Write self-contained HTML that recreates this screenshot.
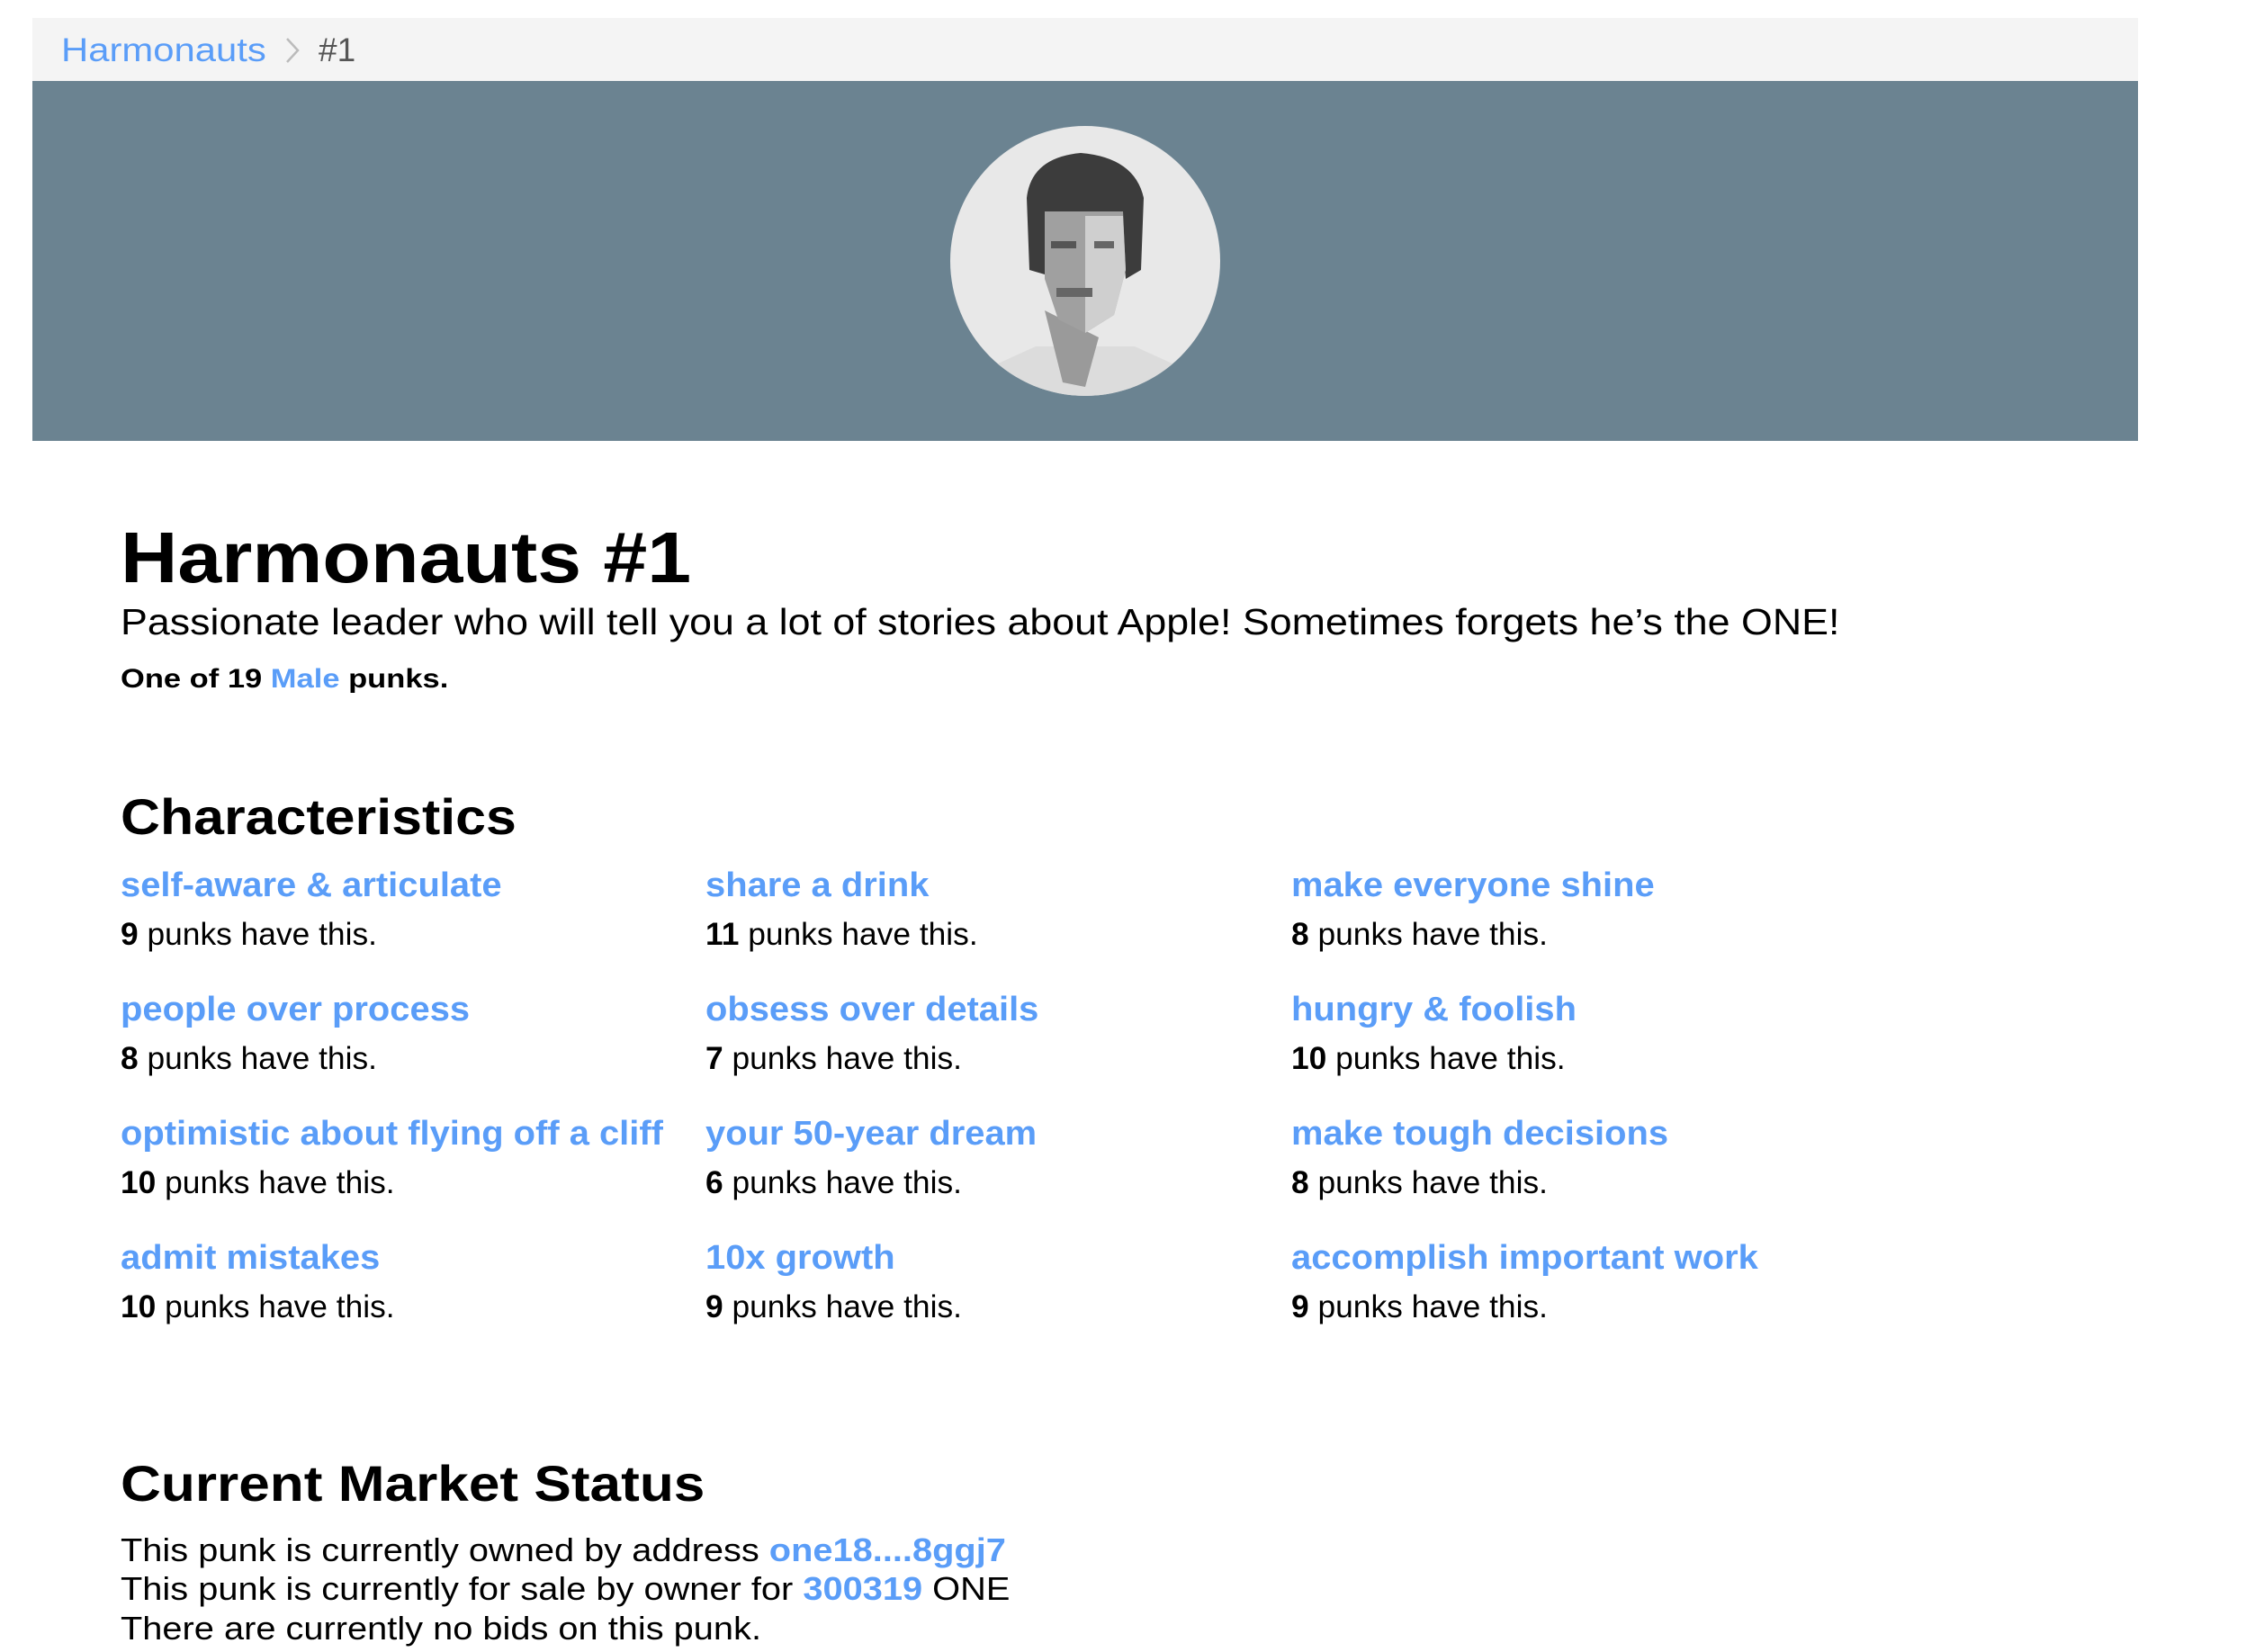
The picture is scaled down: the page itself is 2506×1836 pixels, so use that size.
<!DOCTYPE html>
<html><head><meta charset="utf-8"><style>
html,body{margin:0;padding:0;background:#fff;width:2506px;height:1836px;overflow:hidden;position:relative;font-family:"Liberation Sans",sans-serif;color:#000}
.a{position:absolute;white-space:nowrap;line-height:1;transform-origin:0 0}
.b{color:#5a9df8}
.bold{font-weight:bold}
.l{transform:scaleX(1.05)}
.c{transform:scaleX(1.01)}
.m{transform:scaleX(1.105)}
</style></head><body>
<div class="a" style="left:36px;top:20px;width:2340px;height:70px;background:#f4f4f4"></div>
<div class="a b" style="left:68px;top:37px;font-size:37px;transform:scaleX(1.13)">Harmonauts</div>
<svg class="a" style="left:314px;top:40px" width="24" height="32" viewBox="0 0 24 32"><path d="M5 3 L17 16 L5 29" fill="none" stroke="#bbb" stroke-width="2.5"/></svg>
<div class="a" style="left:354px;top:37px;font-size:37px;color:#555">#1</div>
<div class="a" style="left:36px;top:90px;width:2340px;height:400px;background:#6b8391"></div>
<svg class="a" style="left:1056px;top:140px" width="300" height="300" viewBox="0 0 300 300">
<defs><clipPath id="c"><circle cx="150" cy="150" r="150"/></clipPath></defs>
<circle cx="150" cy="150" r="150" fill="#e8e8e8"/>
<g clip-path="url(#c)">
<path d="M40 270 L95 245 L205 245 L260 270 L270 300 L30 300Z" fill="#dcdcdc"/>
<path d="M105 205 L125 285 L150 290 L165 235 Z" fill="#9a9a9a"/>
<path d="M85 80 Q90 35 145 30 Q205 35 215 80 L212 160 L195 170 L190 100 L110 100 L105 165 L88 160 Z" fill="#3c3c3c"/>
<path d="M105 95 L192 95 L195 160 L182 210 L150 230 L120 215 L105 170 Z" fill="#a0a0a0"/>
<path d="M150 100 L192 100 L195 160 L182 210 L150 230 Z" fill="#cfcfcf"/>
<rect x="112" y="128" width="28" height="8" fill="#555"/>
<rect x="160" y="128" width="22" height="8" fill="#666"/>
<rect x="118" y="180" width="40" height="10" fill="#666"/>
</g></svg>

<div class="a bold" style="left:134px;top:580px;font-size:80px;transform:scaleX(1.097)">Harmonauts #1</div>
<div class="a" style="left:134px;top:671px;font-size:41px;transform:scaleX(1.092)">Passionate leader who will tell you a lot of stories about Apple! Sometimes forgets he’s the ONE!</div>
<div class="a bold" style="left:134px;top:740px;font-size:30px;transform:scaleX(1.15)">One of 19 <span class="b">Male</span> punks.</div>

<div class="a bold" style="left:134px;top:880px;font-size:56px;transform:scaleX(1.087)">Characteristics</div>

<div class="a bold b l" style="left:134px;top:965px;font-size:38px">self-aware &amp; articulate</div>
<div class="a c" style="left:134px;top:1021px;font-size:35px"><b>9</b> punks have this.</div>
<div class="a bold b l" style="left:784px;top:965px;font-size:38px">share a drink</div>
<div class="a c" style="left:784px;top:1021px;font-size:35px"><b>11</b> punks have this.</div>
<div class="a bold b l" style="left:1435px;top:965px;font-size:38px">make everyone shine</div>
<div class="a c" style="left:1435px;top:1021px;font-size:35px"><b>8</b> punks have this.</div>

<div class="a bold b l" style="left:134px;top:1103px;font-size:38px">people over process</div>
<div class="a c" style="left:134px;top:1159px;font-size:35px"><b>8</b> punks have this.</div>
<div class="a bold b l" style="left:784px;top:1103px;font-size:38px">obsess over details</div>
<div class="a c" style="left:784px;top:1159px;font-size:35px"><b>7</b> punks have this.</div>
<div class="a bold b l" style="left:1435px;top:1103px;font-size:38px">hungry &amp; foolish</div>
<div class="a c" style="left:1435px;top:1159px;font-size:35px"><b>10</b> punks have this.</div>

<div class="a bold b l" style="left:134px;top:1241px;font-size:38px">optimistic about flying off a cliff</div>
<div class="a c" style="left:134px;top:1297px;font-size:35px"><b>10</b> punks have this.</div>
<div class="a bold b l" style="left:784px;top:1241px;font-size:38px">your 50-year dream</div>
<div class="a c" style="left:784px;top:1297px;font-size:35px"><b>6</b> punks have this.</div>
<div class="a bold b l" style="left:1435px;top:1241px;font-size:38px">make tough decisions</div>
<div class="a c" style="left:1435px;top:1297px;font-size:35px"><b>8</b> punks have this.</div>

<div class="a bold b l" style="left:134px;top:1379px;font-size:38px">admit mistakes</div>
<div class="a c" style="left:134px;top:1435px;font-size:35px"><b>10</b> punks have this.</div>
<div class="a bold b l" style="left:784px;top:1379px;font-size:38px">10x growth</div>
<div class="a c" style="left:784px;top:1435px;font-size:35px"><b>9</b> punks have this.</div>
<div class="a bold b l" style="left:1435px;top:1379px;font-size:38px">accomplish important work</div>
<div class="a c" style="left:1435px;top:1435px;font-size:35px"><b>9</b> punks have this.</div>

<div class="a bold" style="left:134px;top:1621px;font-size:56px;transform:scaleX(1.11)">Current Market Status</div>
<div class="a m" style="left:134px;top:1705px;font-size:36px">This punk is currently owned by address <b class="b">one18....8ggj7</b></div>
<div class="a m" style="left:134px;top:1748px;font-size:36px">This punk is currently for sale by owner for <b class="b">300319</b> ONE</div>
<div class="a m" style="left:134px;top:1792px;font-size:36px">There are currently no bids on this punk.</div>
</body></html>
